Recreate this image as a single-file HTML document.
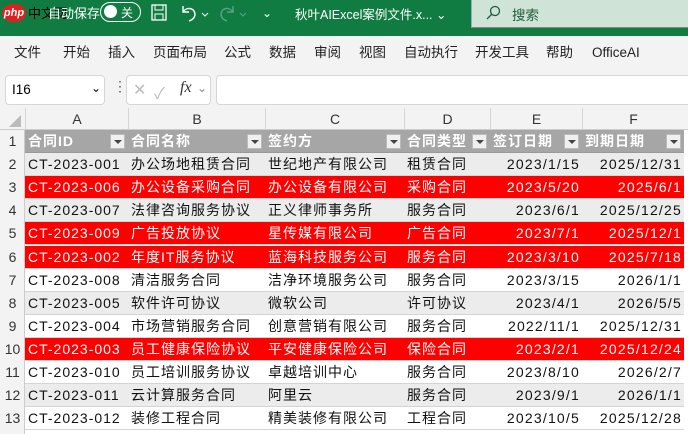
<!DOCTYPE html>
<html><head><meta charset="utf-8"><style>
*{margin:0;padding:0;box-sizing:border-box}
body{width:688px;height:434px;overflow:hidden;background:#fff;font-family:"Liberation Sans","Noto Sans CJK SC",sans-serif;position:relative}
.abs{position:absolute}
#top{left:0;top:0;width:688px;height:36px;background:#107c41;color:#fff;font-size:13px}
#rib{left:0;top:36px;width:688px;height:34px;background:#f3f3f3;font-size:13.5px;color:#222}
#rib span{position:absolute;top:8px;line-height:18px}
#fb{left:0;top:70px;width:688px;height:38px;background:#f3f3f3}
.box{position:absolute;background:#fff;border:1px solid #d6d6d6;border-radius:4px}
.c{position:absolute;font-size:14px;line-height:23px;white-space:nowrap;overflow:hidden;padding:0 3px;color:#111;letter-spacing:1px}
.h{position:absolute;font-size:14px;color:#333;text-align:center;line-height:22px}
.dd{position:absolute;width:15px;height:15px;background:#f0f0f0;border:1px solid #bbb;top:4px}
.dd:after{content:"";position:absolute;left:3px;top:5px;border-left:4px solid transparent;border-right:4px solid transparent;border-top:4px solid #444}
</style></head><body>
<div id="top" class="abs">
 <div class="abs" style="left:2px;top:4px;width:24px;height:18px;background:#e02020;border-radius:50%;font-size:11px;font-style:italic;text-align:center;line-height:18px;font-weight:bold">php</div>
 <div class="abs" style="left:28px;top:3px;font-size:13px;color:#000">中文网</div>
 <div class="abs" style="left:48px;top:3px">自动保存</div>
 <div class="abs" style="left:100px;top:2px;width:41px;height:20px;border:1.5px solid #fff;border-radius:10px"><div class="abs" style="left:3px;top:2px;width:13px;height:13px;border-radius:50%;background:#fff"></div><span class="abs" style="left:20px;top:1px;font-size:12px">关</span></div>
 <svg class="abs" style="left:151px;top:4px" width="16" height="17"><rect x="1" y="1" width="14" height="15" fill="none" stroke="#fff" stroke-width="1.3"/><rect x="4" y="1" width="8" height="5" fill="none" stroke="#fff"/><rect x="4" y="10" width="8" height="6" fill="none" stroke="#fff"/></svg>
 <svg class="abs" style="left:180px;top:4px" width="30" height="18"><path d="M3 2v6h6M3 8c3-5 11-5 12 2c0 4-3 6-6 7" fill="none" stroke="#fff" stroke-width="1.4"/><path d="M22 9l3 3l3-3" fill="none" stroke="#fff"/></svg>
 <svg class="abs" style="left:218px;top:4px" width="30" height="18" opacity=".5"><path d="M15 2v6h-6M15 8c-3-5-11-5-12 2c0 4 3 6 6 7" fill="none" stroke="#9cc" stroke-width="1.4"/><path d="M22 9l3 3l3-3" fill="none" stroke="#9cc"/></svg>
 <div class="abs" style="left:262px;top:6px;font-size:12px">⌄</div>
 <div class="abs" style="left:295px;top:4px;font-size:12.5px">秋叶AIExcel案例文件.x... ⌄</div>
 <div class="abs" style="left:471px;top:0;width:217px;height:28px;background:#cfe3d7;border-left:1px solid #9ab;border-bottom:1px solid #888"></div>
 <svg class="abs" style="left:485px;top:5px" width="16" height="16"><circle cx="10" cy="6" r="4.5" fill="none" stroke="#1b5e3a" stroke-width="1.3"/><path d="M7 9l-5 5" stroke="#1b5e3a" stroke-width="1.3"/></svg>
 <div class="abs" style="left:512px;top:4px;color:#1b5e3a;font-size:13.5px">搜索</div>
</div>
<div id="rib" class="abs">
 <span style="left:14px">文件</span><span style="left:63px">开始</span><span style="left:108px">插入</span><span style="left:153px">页面布局</span><span style="left:224px">公式</span><span style="left:269px">数据</span><span style="left:314px">审阅</span><span style="left:359px">视图</span><span style="left:404px">自动执行</span><span style="left:475px">开发工具</span><span style="left:546px">帮助</span><span style="left:592px">OfficeAI</span>
</div>
<div id="fb" class="abs">
 <div class="box" style="left:5px;top:5px;width:100px;height:30px"><span class="abs" style="left:6px;top:6px;font-size:13.5px">I16</span><span class="abs" style="left:85px;top:5px;font-size:12px">⌄</span></div>
 <div class="abs" style="left:113px;top:8px;font-size:14px;color:#555">⋮</div>
 <div class="box" style="left:126px;top:5px;width:85px;height:30px;color:#bbb"><span class="abs" style="left:6px;top:4px;font-size:16px">✕</span><span class="abs" style="left:27px;top:4px;font-size:16px">✓</span><span class="abs" style="left:53px;top:3px;font-size:16px;color:#333;font-family:'Liberation Serif',serif;font-style:italic">fx</span><span class="abs" style="left:70px;top:5px;font-size:12px;color:#888">⌄</span></div>
 <div class="box" style="left:216px;top:5px;width:480px;height:30px"></div>
</div>
<div class="abs" style="left:0;top:108px;width:688px;height:22px;background:#f3f3f3;border-bottom:1px solid #ccc"></div>
<svg class="abs" style="left:8px;top:115px" width="14" height="12"><path d="M13 0v12H1z" fill="#bbb"/></svg>
<div class="abs" style="left:0;top:130px;width:25px;height:304px;background:#f3f3f3;border-right:1px solid #ccc"></div>
<div id="grid"></div>
<script>
var cols=[25,128,265,404,490,582,684];
var L=['A','B','C','D','E','F'];
var g='';
for(var i=0;i<6;i++){g+='<div class="h" style="left:'+cols[i]+'px;top:108px;width:'+(cols[i+1]-cols[i])+'px;border-left:1px solid #d6d6d6">'+L[i]+'</div>';}
var hd=['合同ID','合同名称','签约方','合同类型','签订日期','到期日期'];
var d=[
['CT-2023-001','办公场地租赁合同','世纪地产有限公司','租赁合同','2023/1/15','2025/12/31'],
['CT-2023-006','办公设备采购合同','办公设备有限公司','采购合同','2023/5/20','2025/6/1'],
['CT-2023-007','法律咨询服务协议','正义律师事务所','服务合同','2023/6/1','2025/12/25'],
['CT-2023-009','广告投放协议','星传媒有限公司','广告合同','2023/7/1','2025/12/1'],
['CT-2023-002','年度IT服务协议','蓝海科技服务公司','服务合同','2023/3/10','2025/7/18'],
['CT-2023-008','清洁服务合同','洁净环境服务公司','服务合同','2023/3/15','2026/1/1'],
['CT-2023-005','软件许可协议','微软公司','许可协议','2023/4/1','2026/5/5'],
['CT-2023-004','市场营销服务合同','创意营销有限公司','服务合同','2022/11/1','2025/12/31'],
['CT-2023-003','员工健康保险协议','平安健康保险公司','保险合同','2023/2/1','2025/12/24'],
['CT-2023-010','员工培训服务协议','卓越培训中心','服务合同','2023/8/10','2026/2/7'],
['CT-2023-011','云计算服务合同','阿里云','服务合同','2023/9/1','2026/1/1'],
['CT-2023-012','装修工程合同','精美装修有限公司','工程合同','2023/10/5','2025/12/28']];
var red={3:1,5:1,6:1,10:1};
var rh=23.1,t0=130;
for(var r=1;r<=13;r++){
 var y=t0+(r-1)*rh;
 g+='<div class="h" style="left:0;width:25px;top:'+y+'px;line-height:23px">'+r+'</div>';
 var bg=r==1?'#a6a6a6':red[r]?'#ff0000':(r%2==0?'#ececec':'#fff');
 g+='<div class="abs" style="left:25px;top:'+y+'px;width:659px;height:'+rh+'px;background:'+bg+';border-bottom:1px solid '+(r==1?'#999':'#d4d4d4')+'"></div>';
 for(var c=0;c<6;c++){
  var txt=r==1?hd[c]:d[r-2][c];
  var col=r==1||red[r]?'#fff':'#111';
  var st='left:'+cols[c]+'px;top:'+y+'px;width:'+(cols[c+1]-cols[c])+'px;color:'+col+';'+(r==1?'font-weight:bold;':'')+(r>1&&c>=4?'text-align:right;padding-right:2px;letter-spacing:1.2px;':'');
  g+='<div class="c" style="'+st+'">'+txt+'</div>';
  if(r==1)g+='<div class="dd" style="left:'+(cols[c+1]-18)+'px;top:'+(y+4)+'px"></div>';
 }
}
document.getElementById('grid').innerHTML=g;
</script>
</body></html>
